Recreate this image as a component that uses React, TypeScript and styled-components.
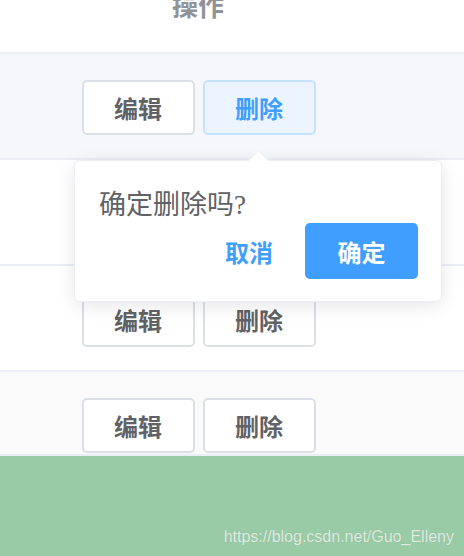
import React from 'react'
import styled, { createGlobalStyle } from 'styled-components'

const GlobalStyle = createGlobalStyle`
  body {
    margin: 0;
    font-family: "Noto Sans CJK SC", "Noto Sans", sans-serif;
  }
`

const Screen = styled.div`
  width: 464px;
  height: 556px;
  overflow: hidden;
  display: flex;
  flex-direction: column;
  background: #fff;
`

const Table = styled.div`
  position: relative;
  display: flex;
  flex-direction: column;
`

const HeaderRow = styled.div`
  height: 52px;
  border-bottom: 2px solid #ebeef5;
  display: flex;
  background: #fff;
`

const HeaderCell = styled.div`
  width: 396px;
  display: flex;
  justify-content: center;
`

const HeaderTitle = styled.span`
  margin-top: -9px;
  font-size: 26px;
  line-height: 28px;
  font-weight: 700;
  color: #909399;
`

const Row = styled.div<{ $bg: string; $height: number }>`
  height: ${(p) => p.$height}px;
  border-bottom: 2px solid #ebeef5;
  background: ${(p) => p.$bg};
  display: flex;
`

const ActionCell = styled.div`
  width: 397px;
  padding-top: 26px;
  display: flex;
  justify-content: center;
  align-items: flex-start;
  gap: 8px;
`

const Button = styled.button<{ $active?: boolean }>`
  box-sizing: border-box;
  width: 113px;
  height: 55px;
  padding: 0;
  border: 2px solid ${(p) => (p.$active ? '#c6e2ff' : '#dcdfe6')};
  border-radius: 5px;
  background: ${(p) => (p.$active ? '#ecf5ff' : '#fff')};
  color: ${(p) => (p.$active ? '#409eff' : '#606266')};
  font-family: inherit;
  font-size: 24px;
  font-weight: 700;
  line-height: 1;
`

const Popover = styled.div`
  position: absolute;
  top: 160px;
  left: 74px;
  box-sizing: border-box;
  width: 368px;
  height: 142px;
  padding: 30px 23px 0 24px;
  background: #fff;
  border: 1px solid #ebeef5;
  border-radius: 6px;
  box-shadow: 0 4px 18px 0 rgba(0, 0, 0, 0.1);

  &::before {
    content: '';
    position: absolute;
    top: -8px;
    left: 176px;
    width: 14px;
    height: 14px;
    background: #fff;
    border-top: 1px solid #ebeef5;
    border-left: 1px solid #ebeef5;
    transform: rotate(45deg);
  }
`

const PopTitle = styled.p`
  margin: 0;
  font-family: "Liberation Serif", "Noto Sans CJK SC", serif;
  font-size: 27px;
  line-height: 28px;
  color: #606266;
`

const PopFooter = styled.div`
  margin-top: 4px;
  display: flex;
  justify-content: flex-end;
  align-items: center;
  gap: 32px;
`

const TextButton = styled.button`
  padding: 0;
  border: 0;
  background: none;
  color: #409eff;
  font-family: inherit;
  font-size: 24px;
  font-weight: 700;
`

const PrimaryButton = styled.button`
  width: 113px;
  height: 56px;
  border: 0;
  border-radius: 5px;
  background: #409eff;
  color: #fff;
  font-family: inherit;
  font-size: 24px;
  font-weight: 700;
`

const Footer = styled.div`
  flex: 1;
  background: #99cba6;
  display: flex;
  justify-content: flex-end;
  align-items: flex-end;
  padding: 0 10px 10px 0;
`

const Watermark = styled.span`
  font-family: "Liberation Sans", Arial, sans-serif;
  font-size: 16px;
  color: rgba(255, 255, 255, 0.75);
  text-shadow: 0 0 1px rgba(0, 0, 0, 0.15);
`

const rows = [
  { bg: '#f5f7fa', height: 104, active: true },
  { bg: '#fff', height: 104, active: false },
  { bg: '#fff', height: 104, active: false },
  { bg: '#fafafa', height: 82, active: false },
]

const App: React.FC = () => {
  return (
    <Screen>
      <GlobalStyle />
      <Table>
        <HeaderRow>
          <HeaderCell>
            <HeaderTitle>操作</HeaderTitle>
          </HeaderCell>
        </HeaderRow>

        {rows.map((row, i) => (
          <Row key={i} $bg={row.bg} $height={row.height}>
            <ActionCell>
              <Button>编辑</Button>
              <Button $active={row.active}>删除</Button>
            </ActionCell>
          </Row>
        ))}

        <Popover>
          <PopTitle>确定删除吗?</PopTitle>
          <PopFooter>
            <TextButton>取消</TextButton>
            <PrimaryButton>确定</PrimaryButton>
          </PopFooter>
        </Popover>
      </Table>

      <Footer>
        <Watermark>https://blog.csdn.net/Guo_Elleny</Watermark>
      </Footer>
    </Screen>
  )
}

export default App
